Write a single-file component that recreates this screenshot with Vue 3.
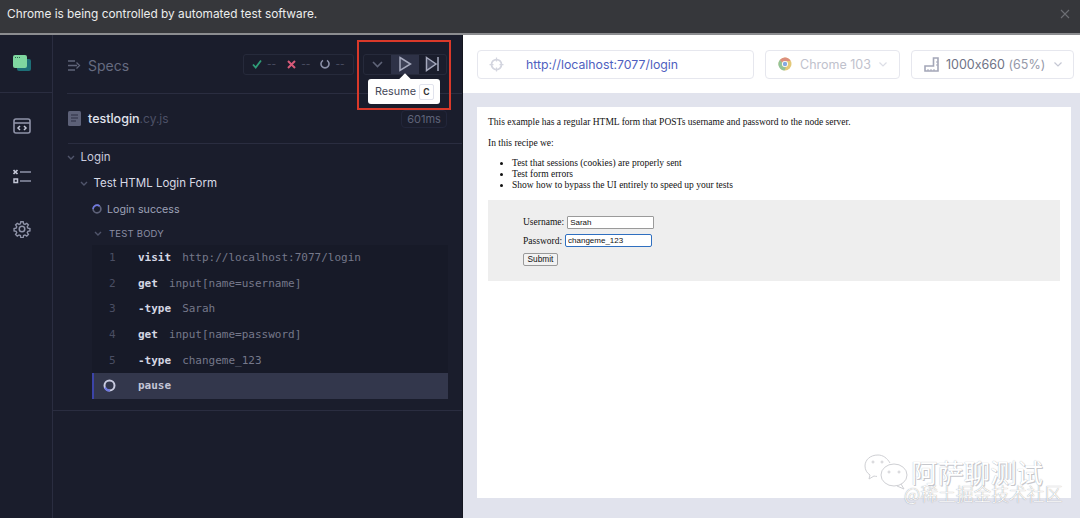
<script setup>
const rows = [
  { n: '1', cmd: 'visit', arg: 'http://localhost:7077/login' },
  { n: '2', cmd: 'get', arg: 'input[name=username]' },
  { n: '3', cmd: '-type', arg: 'Sarah' },
  { n: '4', cmd: 'get', arg: 'input[name=password]' },
  { n: '5', cmd: '-type', arg: 'changeme_123' }
]
</script>

<template>
  <div class="app">
    <header class="infobar">
      <span>Chrome is being controlled by automated test software.</span>
      <svg class="close" width="10" height="10" viewBox="0 0 10 10"><path d="M1 1l8 8M9 1l-8 8" stroke="#6c6e73" stroke-width="1.1"/></svg>
    </header>
    <div class="main">
      <nav class="nav">
        <div class="nav-logo">
          <svg width="18" height="16" viewBox="0 0 18 16">
            <rect x="4" y="4" width="14" height="12" rx="2" fill="#1d6f77"/>
            <rect x="0" y="0" width="14" height="13" rx="2" fill="#7fd7a0"/>
            <path d="M2 2.500h1M4 2.500h1M6 2.500h1" stroke="#2d6a4f" stroke-width="1"/>
          </svg>
        </div>
        <div class="nav-items">
          <svg width="18" height="16" viewBox="0 0 18 16" fill="none" stroke="#8f93a8" stroke-width="1.600">
            <rect x="1" y="1" width="16" height="14" rx="2"/>
            <path d="M1 5h16" />
            <path d="M7 8l-2 2 2 2M11 8l2 2-2 2" stroke="#c3c6d6" stroke-width="1.500"/>
          </svg>
          <svg width="18" height="16" viewBox="0 0 18 16" fill="none" stroke="#8f93a8" stroke-width="1.500">
            <path d="M.5 1l4 4M4.500 1l-4 4" stroke="#c3c6d6" stroke-width="1.700"/>
            <path d="M7 3h11M7 12h11"/>
            <rect x="1" y="10" width="3.500" height="3.500" stroke="#c3c6d6"/>
          </svg>
          <svg width="18" height="18" viewBox="0 0 24 24" fill="none" stroke="#8f93a8" stroke-width="2">
            <path d="M10.300 2h3.400l.6 3 2 .9 2.600-1.700 2.400 2.400-1.700 2.600.9 2 3 .6v3.400l-3 .6-.9 2 1.700 2.600-2.400 2.400-2.600-1.700-2 .9-.6 3h-3.400l-.6-3-2-.9-2.600 1.700-2.400-2.400 1.700-2.600-.9-2-3-.6v-3.400l3-.6.9-2-1.700-2.600 2.400-2.400 2.600 1.700 2-.9z" transform="translate(12 12) scale(.92) translate(-12 -12.500)"/>
            <circle cx="12" cy="12" r="3.700"/>
          </svg>
        </div>
      </nav>

      <section class="reporter">
        <div class="topbar">
          <div class="specs">
            <svg width="14" height="13" viewBox="0 0 14 13" fill="none" stroke="#5f6478" stroke-width="1.300">
              <path d="M1 2h7M1 6.500h9M1 11h7M9.500 3.500l3 3-3 3"/>
            </svg>
            <span>Specs</span>
          </div>
          <div class="stats">
            <svg width="10" height="10" viewBox="0 0 10 10" fill="none" stroke="#2f9d78" stroke-width="1.800"><path d="M1 5.500l2.700 3L9 1.500"/></svg>
            <i>--</i>
            <svg class="st2" width="9" height="9" viewBox="0 0 9 9" fill="none" stroke="#d75a78" stroke-width="2"><path d="M1 1l7 7M8 1L1 8"/></svg>
            <i>--</i>
            <svg class="st3" width="10" height="10" viewBox="0 0 10 10" fill="none" stroke="#8a8fa6" stroke-width="1.600"><path d="M3 1.400a4 4 0 1 0 4 0"/></svg>
            <i>--</i>
          </div>
          <div class="controls">
            <div class="ctl"><svg width="11" height="7" viewBox="0 0 11 7" fill="none" stroke="#5f6478" stroke-width="1.600"><path d="M1 1l4.500 4.500L10 1"/></svg></div>
            <div class="ctl active"><svg width="14" height="16" viewBox="0 0 14 16" fill="#3d4156" stroke="#a5a9bd" stroke-width="1.500"><path d="M2 1.500L12.500 8 2 14.500z"/></svg></div>
            <div class="ctl"><svg width="15" height="16" viewBox="0 0 15 16" fill="#3d4156" stroke="#a5a9bd" stroke-width="1.500"><path d="M1.500 1.500L11 8l-9.500 6.500zM13 1v14"/></svg></div>
          </div>
        </div>

        <div class="spec-line">
          <svg width="13" height="15" viewBox="0 0 13 15">
            <rect width="13" height="15" rx="1.500" fill="#5d6178"/>
            <path d="M3 4h7M3 7h7M3 10h5" stroke="#2c2f42" stroke-width="1.100"/>
          </svg>
          <span class="spec-name">testlogin<em>.cy.js</em></span>
          <span class="time">601ms</span>
        </div>

        <div class="tree">
          <div class="node n1"><svg class="chev" width="8" height="5" viewBox="0 0 8 5" fill="none" stroke="#50556b" stroke-width="1.400"><path d="M1 1l3 3 3-3"/></svg>Login</div>
          <div class="node n2"><svg class="chev" width="8" height="5" viewBox="0 0 8 5" fill="none" stroke="#50556b" stroke-width="1.400"><path d="M1 1l3 3 3-3"/></svg>Test HTML Login Form</div>
          <div class="node n3">
            <svg class="spin" width="10" height="10" viewBox="0 0 10 10" fill="none" stroke-width="1.700">
              <circle cx="5" cy="5" r="3.900" stroke="#5d6178"/>
              <path d="M1.100 5a3.900 3.900 0 0 1 6.500-2.900" stroke="#6f78e0"/>
            </svg>Login success
          </div>
          <div class="node n4"><svg class="chev" width="8" height="5" viewBox="0 0 8 5" fill="none" stroke="#50556b" stroke-width="1.400"><path d="M1 1l3 3 3-3"/></svg>TEST BODY</div>
          <div class="code">
            <div v-for="r in rows" :key="r.n" class="row">
              <span class="num">{{ r.n }}</span>
              <b>{{ r.cmd }}</b>
              <span class="arg">{{ r.arg }}</span>
            </div>
            <div class="row current">
              <span class="num">
                <svg width="13" height="13" viewBox="0 0 13 13" fill="none" stroke-width="2">
                  <circle cx="6.500" cy="6.500" r="5" stroke="#c9cbe0"/>
                  <path d="M2 8.500a5 5 0 0 0 5 3" stroke="#6f78e0"/>
                </svg>
              </span>
              <b>pause</b>
            </div>
          </div>
        </div>
      </section>

      <section class="preview">
        <div class="addr">
          <div class="box url">
            <svg width="15" height="15" viewBox="0 0 30 30" fill="none" stroke="#d3d5df">
              <circle cx="15" cy="15" r="10" stroke-width="3.500"/>
              <path d="M15 1v8M15 21v8M1 15h8M21 15h8" stroke-width="2.500"/>
            </svg>
            <span>http://localhost:7077/login</span>
          </div>
          <div class="box browser">
            <svg width="14" height="14" viewBox="0 0 14 14">
              <circle cx="7" cy="7" r="6.500" fill="#e3c878"/>
              <path d="M7 .5a6.500 6.500 0 0 1 5.700 3.500H7a3 3 0 0 0-2.800 1.800L1.800 3A6.500 6.500 0 0 1 7 .5z" fill="#dc8f7e"/>
              <path d="M1.800 3A6.500 6.500 0 0 0 6.500 13.500L8 10a3 3 0 0 1-3.800-4.200z" fill="#93c398"/>
              <circle cx="7" cy="7" r="3" fill="#fff"/>
              <circle cx="7" cy="7" r="2.200" fill="#85a9e2"/>
            </svg>
            <span>Chrome 103</span>
            <svg class="dn" width="8" height="5" viewBox="0 0 8 5" fill="none" stroke="#dcdee6" stroke-width="1.200"><path d="M.5.500L4 4 7.500.500"/></svg>
          </div>
          <div class="box size">
            <svg width="15" height="15" viewBox="0 0 15 15" fill="none" stroke="#a4a7b8" stroke-width="1.600">
              <path d="M9.500 1h4.500v13H1V9h8.500z"/>
              <path d="M4 14v-2M7 14v-2M10 14v-2M14 5h-2M14 8h-2" stroke-width="1"/>
            </svg>
            <span>1000x660 <em>(65%)</em></span>
            <svg class="dn" width="8" height="5" viewBox="0 0 8 5" fill="none" stroke="#c5c7d3" stroke-width="1.200"><path d="M.5.500L4 4 7.500.500"/></svg>
          </div>
        </div>
        <div class="stage">
          <div class="page">
            <p>This example has a regular HTML form that POSTs username and password to the node server.</p>
            <p class="last">In this recipe we:</p>
            <ul>
              <li>Test that sessions (cookies) are properly sent</li>
              <li>Test form errors</li>
              <li>Show how to bypass the UI entirely to speed up your tests</li>
            </ul>
            <div class="form">
              <div class="f-row">Username: <span class="inp">Sarah</span></div>
              <div class="f-row">Password: <span class="inp focus">changeme_123</span></div>
              <span class="btn">Submit</span>
            </div>
          </div>
        </div>
      </section>
    </div>

    <div class="redbox"></div>
    <div class="tip">Resume <kbd>C</kbd></div>
    <div class="mark">
      <svg width="50" height="38" viewBox="0 0 50 38" fill="none" stroke="#cfd0d4" stroke-width="1">
        <path d="M14 1C6 1 1 6 1 12c0 4 2 7 5 9l-1 4 5-3c1 .3 2 .4 3 .4M26 9C23 4 19 1 14 1"/>
        <ellipse cx="30" cy="21" rx="13" ry="11"/>
        <path d="M37 30l3 5-7-3"/>
        <circle cx="9" cy="8" r="1"/><circle cx="18" cy="8" r="1"/><circle cx="25" cy="18" r="1"/><circle cx="35" cy="18" r="1"/>
      </svg>
      <span class="m1">阿萨聊测试</span>
      <span class="m2">@稀土掘金技术社区</span>
    </div>
  </div>
</template>

<style scoped>
.app { width: 1080px; height: 518px; overflow: hidden; position: relative; font-family: Inter, "Liberation Sans", sans-serif; font-feature-settings: "calt" 0; background: #1a1d2c; }
em, i { font-style: normal; }
.infobar { height: 35px; box-sizing: border-box; background: #36373b; border-bottom: 2px solid #8c8d90; color: #eceded; font-size: 11.850px; display: flex; align-items: center; justify-content: space-between; padding: 0 10px 6px 7px; }
.main { display: flex; height: 483px; }
.nav { width: 53px; flex: none; border-right: 1px solid #2a2d40; box-sizing: border-box; padding-right: 8px; }
.nav-logo { height: 58px; margin-right: -8px; padding-right: 8px; padding-bottom: 2px; border-bottom: 1px solid #2a2d40; display: flex; align-items: center; justify-content: center; box-sizing: border-box; }
.nav-items { display: flex; flex-direction: column; align-items: center; gap: 35px; padding-top: 24.500px; }
.reporter { width: 410px; flex: none; border-right: 1px solid #14161f; box-sizing: border-box; }
.topbar { height: 59px; box-sizing: border-box; margin-left: 14px; border-bottom: 1px solid #2a2d40; display: flex; align-items: center; }
.specs { display: flex; align-items: center; gap: 7px; color: #666b80; font-size: 14px; width: 176px; padding-top: 2px; }
.stats { width: 111px; height: 21px; box-sizing: border-box; border: 1px solid #262a3b; border-radius: 3px; display: flex; align-items: center; padding-left: 8px; color: #4d5166; font-size: 10px; }
.stats i { margin-left: 5px; }
.st2 { margin-left: 11px; }
.st3 { margin-left: 10px; }
.controls { margin-left: 9px; width: 84px; height: 21px; border: 1px solid #262a3b; border-radius: 3px; box-sizing: border-box; display: flex; }
.ctl { flex: 1; display: flex; align-items: center; justify-content: center; }
.ctl.active { background: #2e3247; }
.spec-line { height: 50px; box-sizing: border-box; margin-left: 15px; border-bottom: 1px solid #2a2d40; display: flex; align-items: center; }
.spec-name { margin-left: 7px; color: #e1e3ed; font-size: 12.500px; font-weight: 500; }
.spec-name em { color: #4c5066; font-weight: 400; font-size: 12px; }
.time { margin-left: auto; margin-right: 15px; width: 46px; height: 18px; color: #5f6379; font-size: 11px; border: 1px solid #22263a; border-radius: 4px; box-sizing: border-box; display: flex; align-items: center; justify-content: center; }
.tree { border-bottom: 1px solid #2a2d40; padding-bottom: 11px; }
.node { display: flex; align-items: center; height: 26px; font-size: 11.500px; color: #c9cbdc; }
.chev { margin-right: 6px; flex: none; }
.n1 { padding-left: 13.500px; }
.n2 { padding-left: 26.500px; color: #d8dae6; }
.n3 { padding-left: 39px; font-size: 10.700px; color: #9ea2b8; }
.spin { margin-right: 5px; }
.n4 { padding-left: 41px; height: 23px; font-size: 9.500px; color: #8a8ea4; letter-spacing: .2px; }
.n4 .chev { margin-right: 7px; }
.code { margin-left: 39px; width: 356px; background: #171a28; }
.row { height: 25.600px; display: flex; align-items: center; font-family: "DejaVu Sans Mono", monospace; font-size: 11px; box-sizing: border-box; }
.num { width: 46px; padding-left: 17px; box-sizing: border-box; color: #4a4e63; flex: none; display: flex; align-items: center; }
.row b { color: #d5d7e4; font-weight: 700; }
.arg { margin-left: 11px; color: #75788a; }
.current { background: #33374c; border-left: 2px solid #3c44a8; }
.current .num { width: 44px; padding-left: 9px; }
.current b { color: #c3c5d6; }
.preview { flex: 1; background: #e1e3ed; display: flex; flex-direction: column; }
.addr { height: 58px; background: #fff; display: flex; align-items: center; padding: 0 7px 0 14px; gap: 11px; box-sizing: border-box; }
.box { height: 29px; box-sizing: border-box; border: 1px solid #e6e7ee; border-radius: 4px; display: flex; align-items: center; font-size: 12.500px; }
.url { width: 277px; padding-left: 11px; color: #4f5fc0; font-size: 12.300px; }
.url span { margin-left: 22px; }
.browser { width: 135px; padding-left: 12px; color: #bfc2cd; }
.browser span { margin-left: 8px; }
.browser .dn { margin-left: 8px; }
.size { width: 163px; padding-left: 12px; color: #6f7386; }
.size span { margin-left: 7px; }
.size em { color: #9599a9; }
.size .dn { margin-left: 9px; }
.stage { flex: 1; padding: 14px 10px 20px 14px; }
.page { height: 391px; background: #fff; box-sizing: border-box; padding: 10px 11px 0; font-family: "Liberation Serif", serif; font-size: 9.500px; color: #111; }
.page p { margin: 0 0 10.500px; line-height: 10.500px; }
.page p.last { margin-bottom: 9.750px; }
.page ul { margin: 0; padding-left: 24px; line-height: 11px; }
.form { margin-top: 9px; height: 81px; background: #eee; padding: 12.500px 35px 0; box-sizing: border-box; }
.f-row { height: 18.500px; display: flex; align-items: center; gap: 3px; }
.inp { height: 13px; box-sizing: border-box; border: 1px solid #9a9a9a; background: #fff; font-family: "Liberation Sans", sans-serif; font-size: 8px; width: 87px; display: flex; align-items: center; padding-left: 2px; border-radius: 1px; }
.inp.focus { border: 1.500px solid #2f6fc0; border-radius: 2px; }
.btn { display: inline-flex; align-items: center; justify-content: center; margin-top: 3px; width: 35px; height: 13px; box-sizing: border-box; border: 1px solid #9a9a9a; border-radius: 2px; background: #f2f2f2; font-family: "Liberation Sans", sans-serif; font-size: 8.300px; }
.redbox { position: absolute; left: 357px; top: 40px; width: 94px; height: 70px; box-sizing: border-box; border: 2.500px solid #d9392a; }
.tip { position: absolute; left: 368px; top: 79px; width: 72px; height: 25px; box-sizing: border-box; background: #fff; border-radius: 3px; color: #444858; font-size: 10.800px; display: flex; align-items: center; padding-left: 7px; gap: 3px; }
.tip::before { content: ""; position: absolute; left: 33px; top: -4px; width: 8px; height: 8px; background: #fff; transform: rotate(45deg); }
.tip kbd { width: 15px; height: 16px; box-sizing: border-box; border: 1px solid #e1e3ed; border-radius: 2px; display: flex; align-items: center; justify-content: center; font-family: Inter, sans-serif; font-size: 8.500px; font-weight: 700; color: #333; }
.mark { position: absolute; left: 864px; top: 454px; width: 210px; height: 50px; pointer-events: none; }
.m1 { position: absolute; left: 47px; top: 5px; font-family: "Noto Sans CJK SC", sans-serif; font-size: 26.400px; line-height: 26px; color: #fff; text-shadow: 0 0 1px #a9aab0, 1px 1px 0 #c9cad0; white-space: nowrap; }
.m2 { position: absolute; left: 40px; top: 31px; font-family: "Noto Sans CJK SC", sans-serif; font-weight: 300; font-size: 17.800px; line-height: 16px; color: #fff; text-shadow: 0 0 1px #77787e; white-space: nowrap; }
</style>

<style>
html, body { margin: 0; background: #1a1d2c; }
</style>
